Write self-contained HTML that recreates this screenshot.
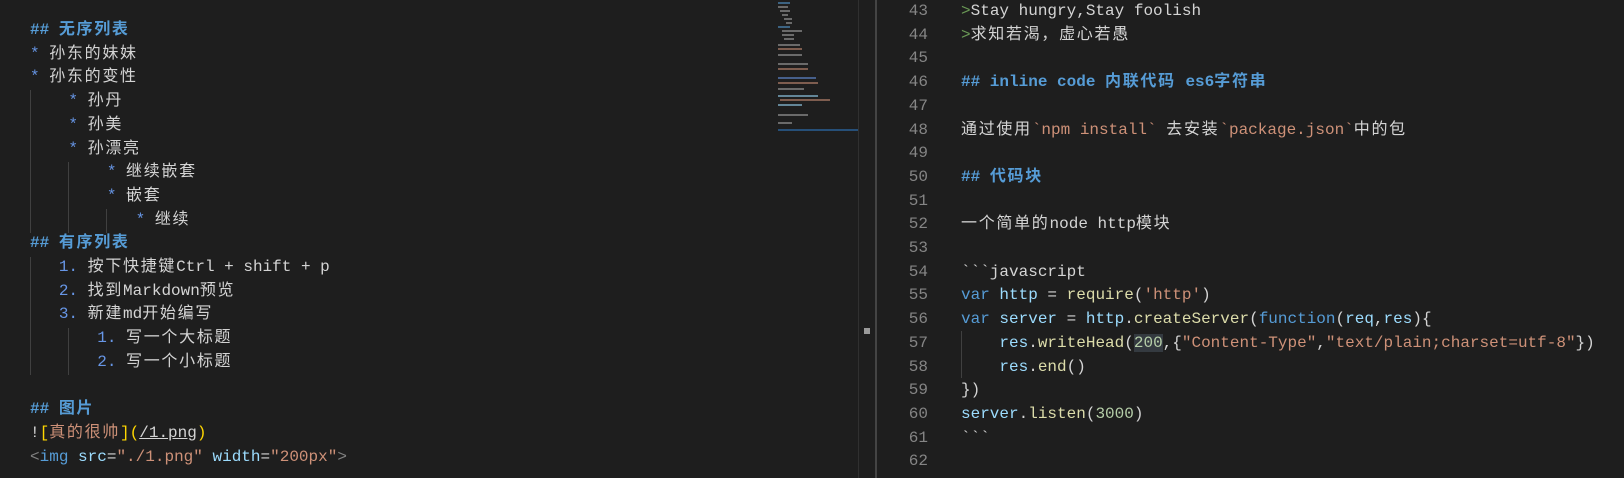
<!DOCTYPE html>
<html><head><meta charset="utf-8"><style>
html,body{margin:0;padding:0;background:#1e1e1e;width:1624px;height:478px;overflow:hidden}
body{position:relative;font-family:"Liberation Mono","Noto Sans CJK SC",monospace;font-size:16px;color:#d4d4d4}
.l{position:absolute;white-space:pre;height:24px;line-height:24px}
i{font-style:normal;letter-spacing:1.7px}
.h{color:#569cd6;font-weight:bold}
.b{color:#6796e6}
.s{color:#ce9178}
.k{color:#569cd6}
.v{color:#9cdcfe}
.f{color:#dcdcaa}
.n{color:#b5cea8}
.g{color:#808080}
.y{color:#ffd700}
.q{color:#6a9955}
.ln{position:absolute;left:880px;width:48px;text-align:right;color:#858585;line-height:24px;height:24px}
.gd{position:absolute;width:1px;background:#404040}
.mm{position:absolute;height:2px;opacity:.55}
</style></head><body>
<div class="gd" style="left:30px;top:90px;height:143px"></div>
<div class="gd" style="left:68px;top:162px;height:71px"></div>
<div class="gd" style="left:106px;top:209px;height:24px"></div>
<div class="gd" style="left:30px;top:257px;height:118px"></div>
<div class="gd" style="left:68px;top:328px;height:47px"></div>

<div class="l" style="left:30px;top:18px"><span class="h">## <i>无序列表</i></span></div>
<div class="l" style="left:30px;top:41.7px"><span class="b">*</span> <i>孙东的妹妹</i></div>
<div class="l" style="left:30px;top:65.4px"><span class="b">*</span> <i>孙东的变性</i></div>
<div class="l" style="left:30px;top:89.1px">    <span class="b">*</span> <i>孙丹</i></div>
<div class="l" style="left:30px;top:112.8px">    <span class="b">*</span> <i>孙美</i></div>
<div class="l" style="left:30px;top:136.5px">    <span class="b">*</span> <i>孙漂亮</i></div>
<div class="l" style="left:30px;top:160.2px">        <span class="b">*</span> <i>继续嵌套</i></div>
<div class="l" style="left:30px;top:183.9px">        <span class="b">*</span> <i>嵌套</i></div>
<div class="l" style="left:30px;top:207.6px">           <span class="b">*</span> <i>继续</i></div>
<div class="l" style="left:30px;top:231.3px"><span class="h">## <i>有序列表</i></span></div>
<div class="l" style="left:30px;top:255px">   <span class="b">1.</span> <i>按下快捷键</i>Ctrl + shift + p</div>
<div class="l" style="left:30px;top:278.7px">   <span class="b">2.</span> <i>找到</i>Markdown<i>预览</i></div>
<div class="l" style="left:30px;top:302.4px">   <span class="b">3.</span> <i>新建</i>md<i>开始编写</i></div>
<div class="l" style="left:30px;top:326.1px">       <span class="b">1.</span> <i>写一个大标题</i></div>
<div class="l" style="left:30px;top:349.8px">       <span class="b">2.</span> <i>写一个小标题</i></div>
<div class="l" style="left:30px;top:397.2px"><span class="h">## <i>图片</i></span></div>
<div class="l" style="left:30px;top:420.9px">!<span class="y">[</span><span class="s"><i>真的很帅</i></span><span class="y">](</span><span style="text-decoration:underline">/1.png</span><span class="y">)</span></div>
<div class="l" style="left:30px;top:444.6px"><span class="g">&lt;</span><span class="k">img</span> <span class="v">src</span>=<span class="s">"./1.png"</span> <span class="v">width</span>=<span class="s">"200px"</span><span class="g">&gt;</span></div>

<div class="mm" style="left:778px;top:2px;width:12px;background:#569cd6"></div>
<div class="mm" style="left:778px;top:6px;width:10px;background:#aaa"></div>
<div class="mm" style="left:780px;top:10px;width:10px;background:#aaa"></div>
<div class="mm" style="left:782px;top:14px;width:6px;background:#aaa"></div>
<div class="mm" style="left:784px;top:18px;width:8px;background:#aaa"></div>
<div class="mm" style="left:786px;top:22px;width:6px;background:#aaa"></div>
<div class="mm" style="left:778px;top:26px;width:12px;background:#569cd6"></div>
<div class="mm" style="left:782px;top:30px;width:20px;background:#aaa"></div>
<div class="mm" style="left:782px;top:34px;width:12px;background:#aaa"></div>
<div class="mm" style="left:784px;top:38px;width:10px;background:#aaa"></div>
<div class="mm" style="left:778px;top:44px;width:22px;background:#aaa"></div>
<div class="mm" style="left:778px;top:48px;width:24px;background:#ce9178"></div>
<div class="mm" style="left:778px;top:54px;width:24px;background:#aaa"></div>
<div class="mm" style="left:778px;top:63px;width:30px;background:#aaa"></div>
<div class="mm" style="left:778px;top:68px;width:30px;background:#ce9178"></div>
<div class="mm" style="left:778px;top:77px;width:38px;background:#6796e6"></div>
<div class="mm" style="left:778px;top:82px;width:40px;background:#ce9178"></div>
<div class="mm" style="left:778px;top:88px;width:26px;background:#aaa"></div>
<div class="mm" style="left:778px;top:95px;width:40px;background:#9cdcfe"></div>
<div class="mm" style="left:780px;top:99px;width:50px;background:#ce9178"></div>
<div class="mm" style="left:778px;top:104px;width:24px;background:#9cdcfe"></div>
<div class="mm" style="left:778px;top:114px;width:30px;background:#aaa"></div>
<div class="mm" style="left:778px;top:122px;width:14px;background:#aaa"></div>
<div style="position:absolute;left:778px;top:129px;width:80px;height:2px;background:#264f78"></div>

<div style="position:absolute;left:858px;top:0;width:1px;height:478px;background:#303030"></div>
<div style="position:absolute;left:864px;top:328px;width:6px;height:6px;background:#9a9a9a"></div>
<div style="position:absolute;left:875px;top:0;width:2px;height:478px;background:#444"></div>

<div class="gd" style="left:961px;top:331px;height:47px"></div>
<div class="ln" style="top:-1px">43</div>
<div class="ln" style="top:22.7px">44</div>
<div class="ln" style="top:46.4px">45</div>
<div class="ln" style="top:70.1px">46</div>
<div class="ln" style="top:93.8px">47</div>
<div class="ln" style="top:117.5px">48</div>
<div class="ln" style="top:141.2px">49</div>
<div class="ln" style="top:164.9px">50</div>
<div class="ln" style="top:188.6px">51</div>
<div class="ln" style="top:212.3px">52</div>
<div class="ln" style="top:236px">53</div>
<div class="ln" style="top:259.7px">54</div>
<div class="ln" style="top:283.4px">55</div>
<div class="ln" style="top:307.1px">56</div>
<div class="ln" style="top:330.8px">57</div>
<div class="ln" style="top:354.5px">58</div>
<div class="ln" style="top:378.2px">59</div>
<div class="ln" style="top:401.9px">60</div>
<div class="ln" style="top:425.6px">61</div>
<div class="ln" style="top:449.3px">62</div>

<div class="l" style="left:961px;top:-1px"><span class="q">&gt;</span>Stay hungry,Stay foolish</div>
<div class="l" style="left:961px;top:22.7px"><span class="q">&gt;</span><i>求知若渴，虚心若愚</i></div>
<div class="l" style="left:961px;top:70.1px"><span class="h">## inline code <i>内联代码</i> es6<i>字符串</i></span></div>
<div class="l" style="left:961px;top:117.5px"><i>通过使用</i><span class="s">&#96;npm install&#96;</span> <i>去安装</i><span class="s">&#96;package.json&#96;</span><i>中的包</i></div>
<div class="l" style="left:961px;top:164.9px"><span class="h">## <i>代码块</i></span></div>
<div class="l" style="left:961px;top:212.3px"><i>一个简单的</i>node http<i>模块</i></div>
<div class="l" style="left:961px;top:259.7px">&#96;&#96;&#96;javascript</div>
<div class="l" style="left:961px;top:283.4px"><span class="k">var</span> <span class="v">http</span> = <span class="f">require</span>(<span class="s">'http'</span>)</div>
<div class="l" style="left:961px;top:307.1px"><span class="k">var</span> <span class="v">server</span> = <span class="v">http</span>.<span class="f">createServer</span>(<span class="k">function</span>(<span class="v">req</span>,<span class="v">res</span>){</div>
<div class="l" style="left:961px;top:330.8px">    <span class="v">res</span>.<span class="f">writeHead</span>(<span class="n" style="background:#343a40">200</span>,{<span class="s">"Content-Type"</span>,<span class="s">"text/plain;charset=utf-8"</span>})</div>
<div class="l" style="left:961px;top:354.5px">    <span class="v">res</span>.<span class="f">end</span>()</div>
<div class="l" style="left:961px;top:378.2px">})</div>
<div class="l" style="left:961px;top:401.9px"><span class="v">server</span>.<span class="f">listen</span>(<span class="n">3000</span>)</div>
<div class="l" style="left:961px;top:425.6px">&#96;&#96;&#96;</div>
</body></html>
